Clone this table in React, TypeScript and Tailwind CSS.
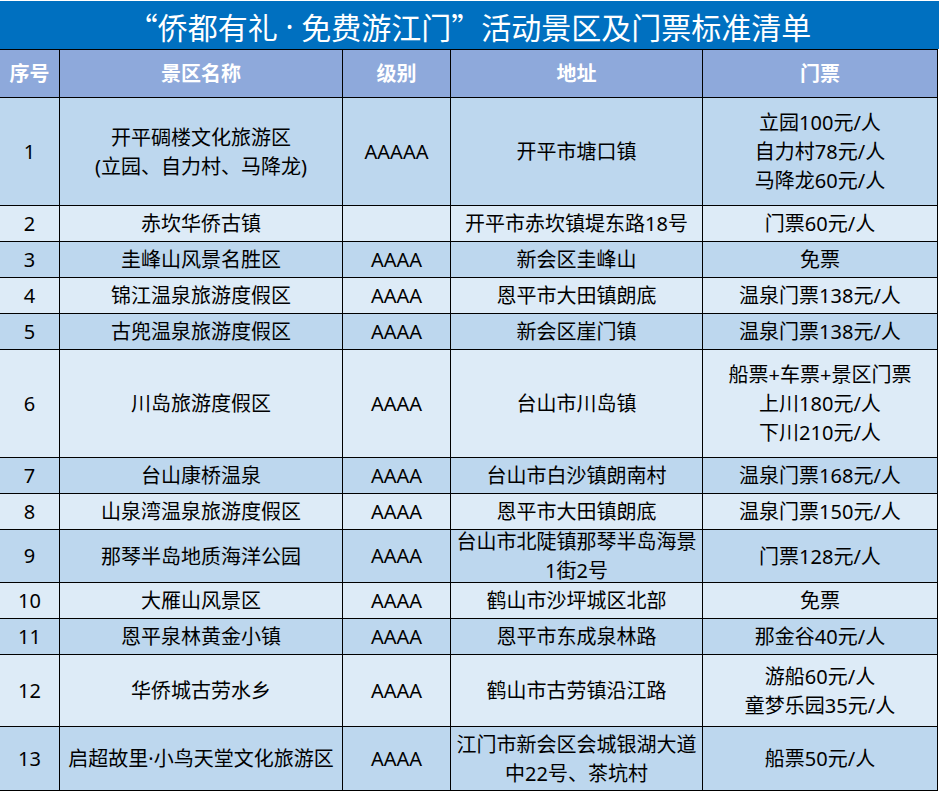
const columns = [
    { label: '序号', width: 'w-[60px]' },
    { label: '景区名称', width: 'w-[283px]' },
    { label: '级别', width: 'w-[108px]' },
    { label: '地址', width: 'w-[252px]' },
    { label: '门票', width: 'w-[235px]' },
];

type Row = {
    no: string;
    name: string[];
    level: string;
    address: string[];
    ticket: string[];
    height: string;
};

const rows: Row[] = [
    { no: '1', name: ['开平碉楼文化旅游区', '(立园、自力村、马降龙)'], level: 'AAAAA', address: ['开平市塘口镇'], ticket: ['立园100元/人', '自力村78元/人', '马降龙60元/人'], height: 'h-[108px]' },
    { no: '2', name: ['赤坎华侨古镇'], level: '', address: ['开平市赤坎镇堤东路18号'], ticket: ['门票60元/人'], height: 'h-[36px]' },
    { no: '3', name: ['圭峰山风景名胜区'], level: 'AAAA', address: ['新会区圭峰山'], ticket: ['免票'], height: 'h-[36px]' },
    { no: '4', name: ['锦江温泉旅游度假区'], level: 'AAAA', address: ['恩平市大田镇朗底'], ticket: ['温泉门票138元/人'], height: 'h-[36px]' },
    { no: '5', name: ['古兜温泉旅游度假区'], level: 'AAAA', address: ['新会区崖门镇'], ticket: ['温泉门票138元/人'], height: 'h-[36px]' },
    { no: '6', name: ['川岛旅游度假区'], level: 'AAAA', address: ['台山市川岛镇'], ticket: ['船票+车票+景区门票', '上川180元/人', '下川210元/人'], height: 'h-[108px]' },
    { no: '7', name: ['台山康桥温泉'], level: 'AAAA', address: ['台山市白沙镇朗南村'], ticket: ['温泉门票168元/人'], height: 'h-[36px]' },
    { no: '8', name: ['山泉湾温泉旅游度假区'], level: 'AAAA', address: ['恩平市大田镇朗底'], ticket: ['温泉门票150元/人'], height: 'h-[36px]' },
    { no: '9', name: ['那琴半岛地质海洋公园'], level: 'AAAA', address: ['台山市北陡镇那琴半岛海景', '1街2号'], ticket: ['门票128元/人'], height: 'h-[53px]' },
    { no: '10', name: ['大雁山风景区'], level: 'AAAA', address: ['鹤山市沙坪城区北部'], ticket: ['免票'], height: 'h-[36px]' },
    { no: '11', name: ['恩平泉林黄金小镇'], level: 'AAAA', address: ['恩平市东成泉林路'], ticket: ['那金谷40元/人'], height: 'h-[36px]' },
    { no: '12', name: ['华侨城古劳水乡'], level: 'AAAA', address: ['鹤山市古劳镇沿江路'], ticket: ['游船60元/人', '童梦乐园35元/人'], height: 'h-[72px]' },
    { no: '13', name: ['启超故里·小鸟天堂文化旅游区'], level: 'AAAA', address: ['江门市新会区会城银湖大道', '中22号、茶坑村'], ticket: ['船票50元/人'], height: 'h-[64px]' },
];

function Lines({ lines }: { lines: string[] }) {
    return (
        <div className="leading-[29px] whitespace-nowrap">
            {lines.map((l, i) => (
                <div key={i}>{l}</div>
            ))}
        </div>
    );
}

export default function App() {
    return (
        <div className="w-[939px] bg-white font-['Noto_Sans','Noto_Sans_CJK_SC',sans-serif]">
            <div className="mt-px h-[48px] bg-[#0070C0] flex items-center justify-center pt-[2px] text-white text-[30px] font-['Noto_Sans_CJK_SC',sans-serif] whitespace-pre">
                “侨都有礼<span className="font-['Noto_Sans',sans-serif]"> · </span>免费游江门”活动景区及门票标准清单
            </div>

            <div className="w-[938px] border-t border-black">
                <div className="flex h-[48px] bg-[#8EA9DB] text-white font-bold text-[20px]">
                    {columns.map(c => (
                        <div key={c.label} className={`${c.width} flex items-center justify-center border-r border-b border-black`}>
                            {c.label}
                        </div>
                    ))}
                </div>

                {rows.map((r, i) => (
                    <div
                        key={r.no}
                        className={`flex ${r.height} text-[20px] text-black ${i % 2 === 0 ? 'bg-[#BDD7EE]' : 'bg-[#DDEBF7]'}`}
                    >
                        <div className="w-[60px] flex items-center justify-center border-r border-b border-black">{r.no}</div>
                        <div className="w-[283px] flex items-center justify-center text-center border-r border-b border-black">
                            <Lines lines={r.name} />
                        </div>
                        <div className="w-[108px] flex items-center justify-center border-r border-b border-black">{r.level}</div>
                        <div className="w-[252px] flex items-center justify-center text-center border-r border-b border-black">
                            <Lines lines={r.address} />
                        </div>
                        <div className="w-[235px] flex items-center justify-center text-center border-r border-b border-black">
                            <Lines lines={r.ticket} />
                        </div>
                    </div>
                ))}
            </div>
        </div>
    );
}
